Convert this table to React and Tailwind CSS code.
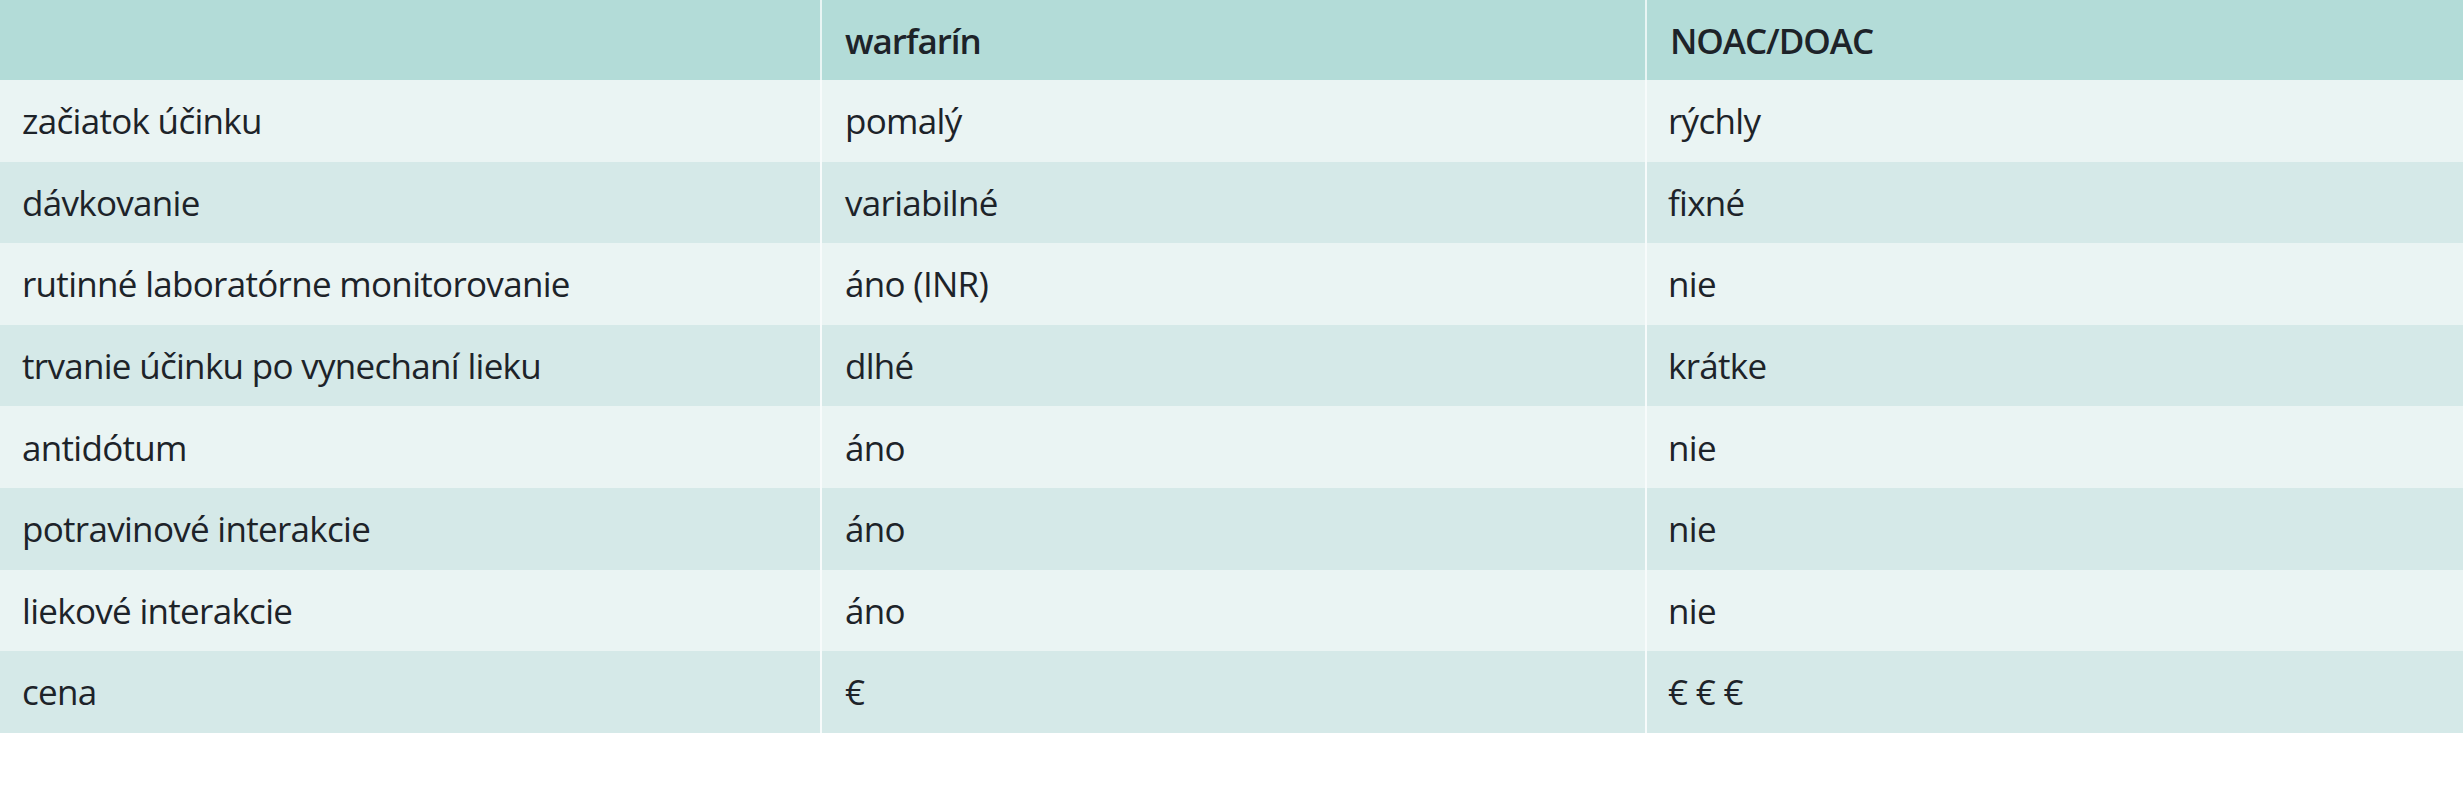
import React from "react";

const rows = [
  ["začiatok účinku", "pomalý", "rýchly"],
  ["dávkovanie", "variabilné", "fixné"],
  ["rutinné laboratórne monitorovanie", "áno (INR)", "nie"],
  ["trvanie účinku po vynechaní lieku", "dlhé", "krátke"],
  ["antidótum", "áno", "nie"],
  ["potravinové interakcie", "áno", "nie"],
  ["liekové interakcie", "áno", "nie"],
  ["cena", "€", "€ € €"],
];

export default function App() {
  return (
    <div className="w-[2463px] h-[800px] bg-white text-[#1d2329] font-['Open_Sans',sans-serif]">
      <div className="grid grid-cols-[820px_825px_1fr] h-[80px] bg-[#b3dcd8] text-[35px] font-semibold tracking-[-0.03em] leading-none">
        <div className="flex items-center pl-[22px]"></div>
        <div className="flex items-center pl-[23px] border-l-2 border-[#e9f5f4]">warfarín</div>
        <div className="flex items-center pl-[23px] border-l-2 border-[#e9f5f4]">NOAC/DOAC</div>
      </div>
      {rows.map((r, i) => (
        <div
          key={i}
          className={
            "grid grid-cols-[820px_825px_1fr] h-[81.6px] text-[35px] tracking-[-0.02em] leading-none " +
            (i % 2 === 0 ? "bg-[#eaf4f3]" : "bg-[#d5e9e8]")
          }
        >
          <div className="flex items-center pl-[22px]">{r[0]}</div>
          <div className="flex items-center pl-[23px] border-l-2 border-[#f7fbfb]">{r[1]}</div>
          <div className="flex items-center pl-[21px] border-l-2 border-[#f7fbfb]">{r[2]}</div>
        </div>
      ))}
    </div>
  );
}
